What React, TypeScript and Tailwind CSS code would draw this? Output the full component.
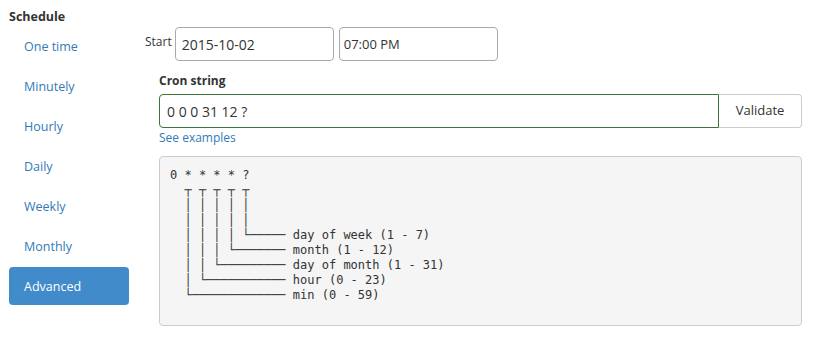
import { useState } from "react";

const TABS = [
  "One time",
  "Minutely",
  "Hourly",
  "Daily",
  "Weekly",
  "Monthly",
  "Advanced",
];

const DIAGRAM = [
  "0 * * * * ?",
  "  ┬ ┬ ┬ ┬ ┬",
  "  │ │ │ │ │",
  "  │ │ │ │ │",
  "  │ │ │ │ └───── day of week (1 - 7)",
  "  │ │ │ └─────── month (1 - 12)",
  "  │ │ └───────── day of month (1 - 31)",
  "  │ └─────────── hour (0 - 23)",
  "  └───────────── min (0 - 59)",
].join("\n");

export default function App() {
  const [active, setActive] = useState("Advanced");
  const [cron, setCron] = useState("0 0 0 31 12 ?");

  return (
    <div className="h-[339px] w-[815px] bg-white font-['Open_Sans',sans-serif] text-[#333]">
      <div className="flex">

        {/* left nav */}
        <div className="w-[159px] shrink-0 pl-[9px]">
          <div className="pt-[8px] text-[12.5px] font-bold leading-[18px]">
            Schedule
          </div>
          <div className="mt-[1px] flex w-[120px] flex-col gap-[2px]">
            {TABS.map((tab) => (
              <button
                key={tab}
                type="button"
                onClick={() => setActive(tab)}
                className={
                  tab === active
                    ? "h-[38px] rounded-[4px] bg-[#428bca] pl-[15px] pt-[2px] text-left text-[12.5px] text-white"
                    : "h-[38px] rounded-[4px] pl-[15px] pt-[2px] text-left text-[12.5px] text-[#337ab7]"
                }
              >
                {tab}
              </button>
            ))}
          </div>
        </div>

        {/* right side */}
        <div className="flex-1 pr-[13px]">
          <div className="-ml-[14px] mt-[27px] flex items-start">
            <span className="pt-[6px] text-[12px] leading-[18px]">Start</span>
            <input
              defaultValue="2015-10-02"
              className="ml-[3px] h-[34px] w-[159px] rounded-[4px] border border-[#aaa] px-[6px] text-[14px] text-[#333] outline-none"
            />
            <input
              defaultValue="07:00 PM"
              className="ml-[5px] h-[34px] w-[159px] rounded-[4px] border border-[#aaa] px-[4px] text-[13px] text-[#333] outline-none"
            />
          </div>

          <div className="mt-[11px] text-[12px] font-bold leading-[18px]">
            Cron string
          </div>
          <div className="mt-[4px] flex h-[34px]">
            <input
              value={cron}
              onChange={(e) => setCron(e.target.value)}
              className="h-full flex-1 rounded-l-[4px] border border-[#3c763d] px-[7px] text-[14px] text-[#333] outline-none"
            />
            <button
              type="button"
              className="h-full w-[83px] rounded-r-[4px] border border-l-0 border-[#ccc] bg-white text-[13px] text-[#333]"
            >
              Validate
            </button>
          </div>
          <a href="#" className="mt-[1px] block text-[12px] leading-[18px] text-[#337ab7]">
            See examples
          </a>

          <pre className="mt-[9px] h-[170px] rounded-[4px] border border-[#ccc] bg-[#f5f5f5] px-[10px] pt-[11px] font-['DejaVu_Sans_Mono',monospace] text-[12px] leading-[15px] text-[#333]">
            {DIAGRAM}
          </pre>
        </div>

      </div>
    </div>
  );
}
